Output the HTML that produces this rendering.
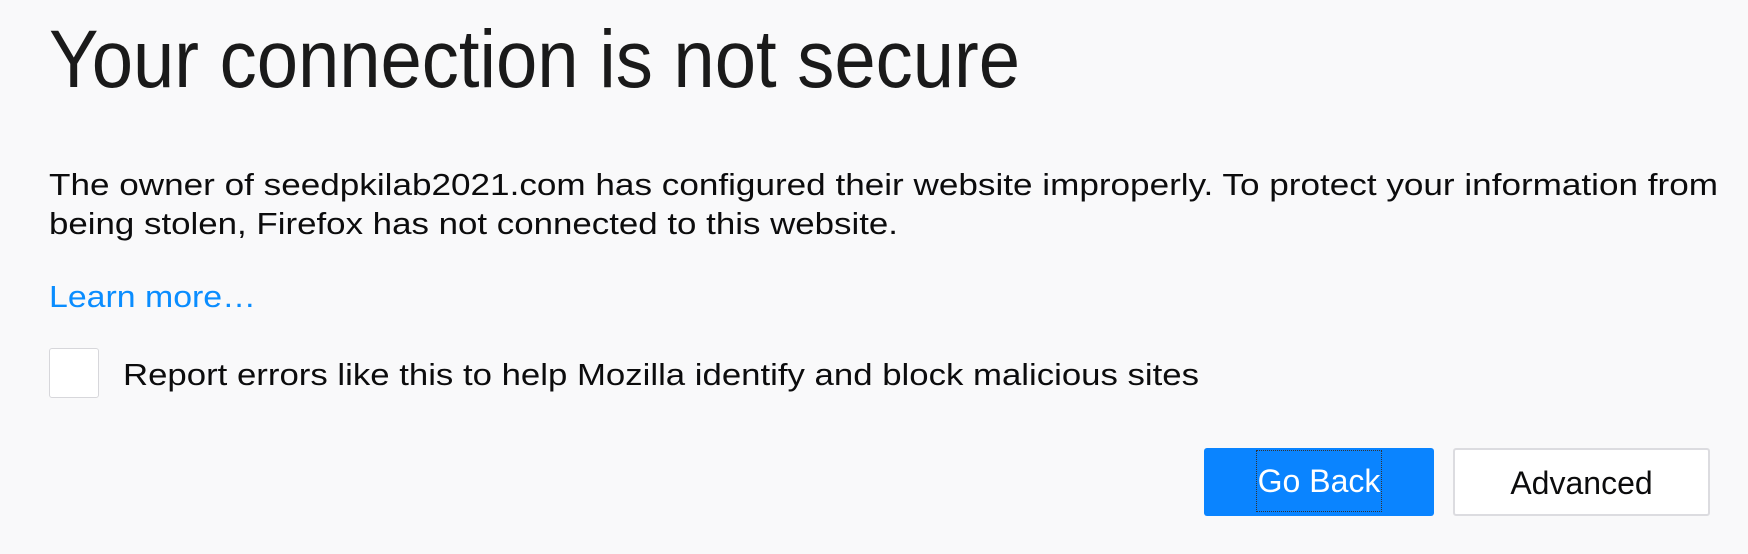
<!DOCTYPE html>
<html><head><style>
body{margin:0;width:1748px;height:554px;background:#f9f9fa;font-family:"Liberation Sans",sans-serif;color:#0c0c0d;position:relative;overflow:hidden}
.t{position:absolute;white-space:nowrap;font-size:31px;line-height:30px;transform-origin:0 0}
h1{position:absolute;left:49px;top:10px;margin:0;font-weight:normal;font-size:82px;line-height:100px;transform-origin:0 0;white-space:nowrap;color:#1a1a1a}
.btn{position:absolute;top:448px;height:68px;border-radius:3px;box-sizing:border-box;font-size:32px;text-align:center;line-height:66px}
</style></head><body>
<h1 data-w="971">Your connection is not secure</h1>
<div class="t" data-w="1669" style="left:49px;top:170px">The owner of seedpkilab2021.com has configured their website improperly. To protect your information from</div>
<div class="t" data-w="849" style="left:49px;top:209px">being stolen, Firefox has not connected to this website.</div>
<div class="t" data-w="207" style="left:49px;top:282px;color:#0a8dff">Learn more…</div>
<div style="position:absolute;left:49px;top:348px;width:50px;height:50px;border:1px solid #d7d7db;border-radius:3px;background:#fff;box-sizing:border-box"></div>
<div class="t" data-w="1076" style="left:123px;top:360px">Report errors like this to help Mozilla identify and block malicious sites</div>
<div class="btn" style="left:1204px;width:230px;background:#0a84ff;color:#fff"><span style="outline:1px dotted #333;padding:2px 1px;display:inline-block;line-height:56px;margin-top:2px">Go Back</span></div>
<div class="btn" style="left:1453px;width:257px;background:#fff;border:2px solid #dcdce0">Advanced</div>
<script>
document.querySelectorAll('[data-w]').forEach(function(e){e.style.display='inline-block';var w=e.getBoundingClientRect().width;e.style.transform='scaleX('+(e.dataset.w/w)+')';});
</script>
</body></html>
